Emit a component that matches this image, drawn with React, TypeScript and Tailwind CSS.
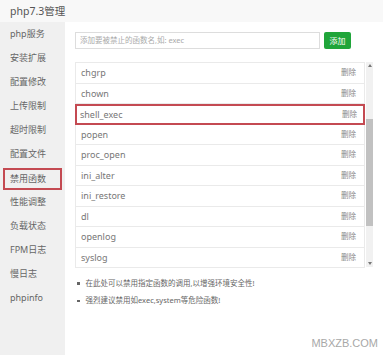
import React from 'react';

const menu = ['php服务', '安装扩展', '配置修改', '上传限制', '超时限制', '配置文件', '禁用函数', '性能调整', '负载状态', 'FPM日志', '慢日志', 'phpinfo'];
const funcs = ['chgrp', 'chown', 'shell_exec', 'popen', 'proc_open', 'ini_alter', 'ini_restore', 'dl', 'openlog', 'syslog'];

export default function App() {
  return (
    <div
      className="relative w-[383px] h-[355px] overflow-hidden bg-white text-[#666]"
      style={{ fontFamily: '"Noto Sans", "Noto Sans CJK SC", sans-serif' }}
    >
      <div className="h-[22px] bg-[#f8f8f8] pl-[10px] text-[10.5px] leading-[22px] text-[#555]">php7.3管理</div>
      <div className="flex h-[333px]">
        <div className="w-[65px] shrink-0 bg-[#f0f0f0] pt-[1px]">
          {menu.map((m) => (
            <div key={m} className="px-[3px]">
              <div
                className={
                  m === '禁用函数'
                    ? 'h-[22px] my-[1px] border-2 border-[#c44a52] pl-[5px] text-[9px] leading-[18px] text-[#666]'
                    : 'h-[24px] pl-[7px] text-[9px] leading-[22px] text-[#666]'
                }
              >
                {m}
              </div>
            </div>
          ))}
        </div>
        <div className="flex-1 pl-[10px] pt-[10px]">
          <div className="flex items-center gap-[4px]">
            <div className="w-[245px] h-[17px] border border-[#ddd] pl-[4px] text-[7.5px] leading-[15px] text-[#aaa]">
              添加要被禁止的函数名,如: exec
            </div>
            <div className="w-[27px] h-[17px] rounded-[2px] bg-[#20a53a] text-center text-[8px] leading-[17px] text-white">添加</div>
          </div>
          <div className="mt-[13px] flex">
            <div className="w-[290px] border-t border-[#eaeaea]">
              {funcs.map((f) => (
                <div
                  key={f}
                  className={
                    f === 'shell_exec'
                      ? 'flex h-[20.5px] items-center justify-between border-2 border-[#c44a52] pl-[3px] pr-[6px]'
                      : 'flex h-[20.5px] items-center justify-between border-x border-b border-[#eaeaea] pl-[5px] pr-[8px]'
                  }
                >
                  <span className="text-[9px] text-[#777]">{f}</span>
                  <span className="text-[7.5px] text-[#888]">删除</span>
                </div>
              ))}
            </div>
            <div className="ml-[1px] flex h-[205px] w-[7px] flex-col items-center bg-[#f1f1f1]">
              <div className="mt-[2px] h-0 w-0 border-x-[2.5px] border-b-[3px] border-x-transparent border-b-[#777]" />
              <div className="mt-[52px] h-[107px] w-[7px] bg-[#c1c1c1]" />
              <div className="mt-auto mb-[2px] h-0 w-0 border-x-[2.5px] border-t-[3px] border-x-transparent border-t-[#777]" />
            </div>
          </div>
          <ul className="mt-[10px] space-y-[6px] text-[7.5px] text-[#666]">
            <li className="flex items-center gap-[6px] pl-[2px]">
              <span className="h-[2.5px] w-[2.5px] bg-[#666]" />
              在此处可以禁用指定函数的调用,以增强环境安全性!
            </li>
            <li className="flex items-center gap-[6px] pl-[2px]">
              <span className="h-[2.5px] w-[2.5px] bg-[#666]" />
              强烈建议禁用如exec,system等危险函数!
            </li>
          </ul>
        </div>
      </div>
      <div className="absolute right-[5px] bottom-[4px] text-[11px] text-[#a8a8a8]" style={{ fontFamily: '"Liberation Sans", sans-serif' }}>
        MBXZB.COM
      </div>
    </div>
  );
}
